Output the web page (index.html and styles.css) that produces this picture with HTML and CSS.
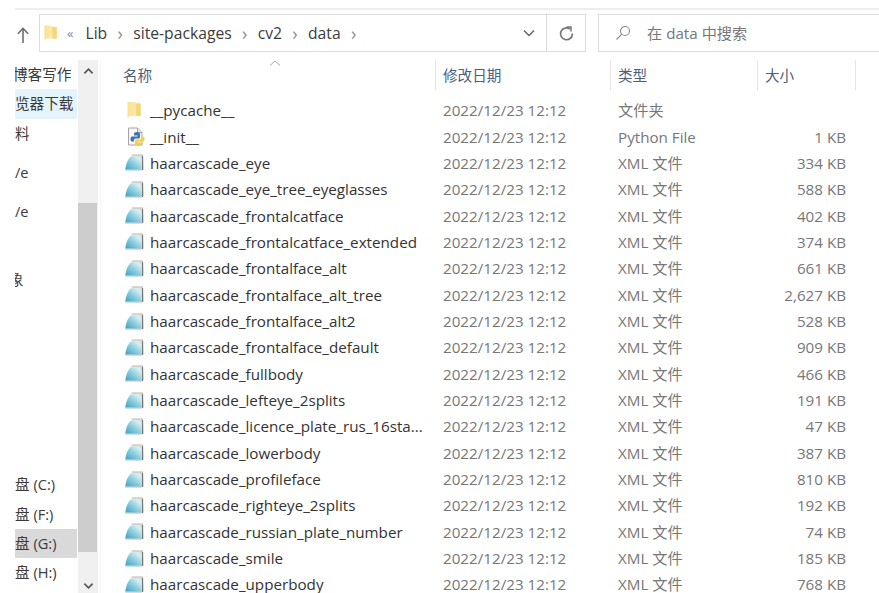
FILE: index.html
```html
<!DOCTYPE html>
<html lang="zh">
<head>
<meta charset="utf-8">
<title>data</title>
<link rel="stylesheet" href="styles.css">
</head>
<body>
<svg class="defs" width="0" height="0" aria-hidden="true">
  <defs>
    <linearGradient id="fold" x1="0" x2="1" y1="0" y2="0"><stop offset="0" stop-color="#fbe08e"/><stop offset="0.6" stop-color="#fde9a8"/><stop offset="1" stop-color="#f6d16e"/></linearGradient>
    <linearGradient id="xmlg" x1="0" x2="1" y1="1" y2="0"><stop offset="0" stop-color="#3f9fc4"/><stop offset="0.5" stop-color="#8fcfdf"/><stop offset="0.85" stop-color="#d8f0f3"/><stop offset="1" stop-color="#b8e2ea"/></linearGradient>
    <symbol id="i-folder" viewBox="0 0 14 16">
      <path d="M.5 0h7.500l1.500 1.500H13.500V14H2.500L.5 16z" fill="url(#fold)"/>
      <path d="M8.500 1.500h5V14h-4z" fill="#f7d679"/>
    </symbol>
    <symbol id="i-py" viewBox="0 0 18 20">
      <path d="M1.500 1h9l4.500 4.500V18h-13.500z" fill="#f7f7f7" stroke="#a5a5a5"/>
      <path d="M10.500 1v4.500H15" fill="#e6e6e6" stroke="#a5a5a5"/>
      <path d="M10 5C7.500 5 7 6 7 7v1.500h3.500v1H5C4 9.500 3.500 10.500 3.500 12s.5 2.500 1.500 2.500h2V13c0-1 1-1.500 2-1.500h2.500c1 0 1.500-.7 1.500-1.500V7c0-1.200-1.200-2-3-2z" fill="#3a76ad"/>
      <path d="M11 19c2.500 0 3-1 3-2v-1.500h-3.500v-1H16c1 0 1.500-1 1.500-2.500S17 9.500 16 9.500h-2V11c0 1-1 1.500-2 1.500H9.500C8.500 12.500 8 13.200 8 14v3c0 1.200 1.200 2 3 2z" fill="#f6cf45"/>
    </symbol>
    <symbol id="i-xml" viewBox="0 0 19 17">
      <path d="M6.500.5H18l.5 15h-2z" fill="#bdb7a8"/>
      <path d="M6 1.500h11.500v14H6z" fill="#e9e7e0"/>
      <path d="M5.500 2.500H16.500V15.500H.3C.8 10 2.800 5.500 5.500 2.500z" fill="url(#xmlg)"/>
      <path d="M17.500 2v14" stroke="#777" stroke-width="1.200" fill="none"/>
      <path d="M.3 16h16.500" stroke="#7fb5c6" stroke-width=".8" fill="none"/>
    </symbol>
  </defs>
</svg>
<div class="window">
  <div class="topline"></div>
  <div class="toolbar">
    <svg class="up" viewBox="0 0 12 16"><path d="M6 16V1.500M.8 6.800 6 1.500l5.200 5.300" fill="none" stroke="#707070" stroke-width="1.600"/></svg>
    <div class="address">
      <svg class="addr-folder"><use href="#i-folder"/></svg>
      <span class="crumb-more">«</span>
      <span class="crumb">Lib</span><span class="sep">›</span>
      <span class="crumb">site-packages</span><span class="sep">›</span>
      <span class="crumb">cv2</span><span class="sep">›</span>
      <span class="crumb">data</span><span class="sep">›</span>
      <span class="spacer"></span>
      <svg class="chev" viewBox="0 0 12 8"><path d="M1 1.500 6 6.500l5-5" fill="none" stroke="#666" stroke-width="1.500"/></svg>
      <span class="refresh">
        <svg viewBox="0 0 16 16"><path d="M11.800 3.300A6.300 6.300 0 1 0 14.300 8" fill="none" stroke="#777" stroke-width="1.800"/><path d="M8 1h4.800v4.800" fill="none" stroke="#777" stroke-width="1.600"/></svg>
      </span>
    </div>
    <div class="search">
      <svg class="lens" viewBox="0 0 16 16"><circle cx="10" cy="6" r="4.500" fill="none" stroke="#8a8a8a" stroke-width="1.100"/><path d="M6.800 9.200 1.500 14.500" stroke="#8a8a8a" stroke-width="1.100"/></svg>
      <span>在 data 中搜索</span>
    </div>
  </div>
  <div class="main">
    <nav class="sidebar">
      <div class="nav"><span class="cut-a">博客写作</span></div>
      <div class="nav active"><span>览器下载</span></div>
      <div class="nav"><span>料</span></div>
      <div class="nav gap-s"><span>/e</span></div>
      <div class="nav gap-s2"><span>/e</span></div>
      <div class="nav gap-l"><span class="cut-e">象</span></div>
      <div class="nav gap-xl"><span>盘 (C:)</span></div>
      <div class="nav"><span>盘 (F:)</span></div>
      <div class="nav selected"><span>盘 (G:)</span></div>
      <div class="nav"><span>盘 (H:)</span></div>
    </nav>
    <div class="scrollbar">
      <div class="sb-btn sb-top"><svg viewBox="0 0 12 8"><path d="M1.500 6.500 6 2l4.500 4.500" fill="none" stroke="#555" stroke-width="1.800"/></svg></div>
      <div class="sb-thumb"></div>
      <div class="sb-btn sb-bottom"><svg viewBox="0 0 12 8"><path d="M1.500 1.500 6 6l4.500-4.500" fill="none" stroke="#555" stroke-width="1.800"/></svg></div>
    </div>
    <section class="files">
      <div class="header">
        <svg class="sort" viewBox="0 0 12 6"><path d="M1 5.500 6 1l5 4.500" fill="none" stroke="#a8a8a8"/></svg>
        <div class="hcell h-name">名称</div>
        <div class="hcell h-date">修改日期</div>
        <div class="hcell h-type">类型</div>
        <div class="hcell h-size">大小</div>
      </div>
      <div class="rows">
        <div class="row"><svg class="ico ico-folder"><use href="#i-folder"/></svg><span class="name">__pycache__</span><span class="cell">2022/12/23 12:12</span><span class="cell">文件夹</span><span class="size"></span></div>
        <div class="row"><svg class="ico ico-py"><use href="#i-py"/></svg><span class="name">__init__</span><span class="cell">2022/12/23 12:12</span><span class="cell">Python File</span><span class="size">1 KB</span></div>
        <div class="row"><svg class="ico"><use href="#i-xml"/></svg><span class="name">haarcascade_eye</span><span class="cell">2022/12/23 12:12</span><span class="cell">XML 文件</span><span class="size">334 KB</span></div>
        <div class="row"><svg class="ico"><use href="#i-xml"/></svg><span class="name">haarcascade_eye_tree_eyeglasses</span><span class="cell">2022/12/23 12:12</span><span class="cell">XML 文件</span><span class="size">588 KB</span></div>
        <div class="row"><svg class="ico"><use href="#i-xml"/></svg><span class="name">haarcascade_frontalcatface</span><span class="cell">2022/12/23 12:12</span><span class="cell">XML 文件</span><span class="size">402 KB</span></div>
        <div class="row"><svg class="ico"><use href="#i-xml"/></svg><span class="name">haarcascade_frontalcatface_extended</span><span class="cell">2022/12/23 12:12</span><span class="cell">XML 文件</span><span class="size">374 KB</span></div>
        <div class="row"><svg class="ico"><use href="#i-xml"/></svg><span class="name">haarcascade_frontalface_alt</span><span class="cell">2022/12/23 12:12</span><span class="cell">XML 文件</span><span class="size">661 KB</span></div>
        <div class="row"><svg class="ico"><use href="#i-xml"/></svg><span class="name">haarcascade_frontalface_alt_tree</span><span class="cell">2022/12/23 12:12</span><span class="cell">XML 文件</span><span class="size">2,627 KB</span></div>
        <div class="row"><svg class="ico"><use href="#i-xml"/></svg><span class="name">haarcascade_frontalface_alt2</span><span class="cell">2022/12/23 12:12</span><span class="cell">XML 文件</span><span class="size">528 KB</span></div>
        <div class="row"><svg class="ico"><use href="#i-xml"/></svg><span class="name">haarcascade_frontalface_default</span><span class="cell">2022/12/23 12:12</span><span class="cell">XML 文件</span><span class="size">909 KB</span></div>
        <div class="row"><svg class="ico"><use href="#i-xml"/></svg><span class="name">haarcascade_fullbody</span><span class="cell">2022/12/23 12:12</span><span class="cell">XML 文件</span><span class="size">466 KB</span></div>
        <div class="row"><svg class="ico"><use href="#i-xml"/></svg><span class="name">haarcascade_lefteye_2splits</span><span class="cell">2022/12/23 12:12</span><span class="cell">XML 文件</span><span class="size">191 KB</span></div>
        <div class="row"><svg class="ico"><use href="#i-xml"/></svg><span class="name">haarcascade_licence_plate_rus_16sta...</span><span class="cell">2022/12/23 12:12</span><span class="cell">XML 文件</span><span class="size">47 KB</span></div>
        <div class="row"><svg class="ico"><use href="#i-xml"/></svg><span class="name">haarcascade_lowerbody</span><span class="cell">2022/12/23 12:12</span><span class="cell">XML 文件</span><span class="size">387 KB</span></div>
        <div class="row"><svg class="ico"><use href="#i-xml"/></svg><span class="name">haarcascade_profileface</span><span class="cell">2022/12/23 12:12</span><span class="cell">XML 文件</span><span class="size">810 KB</span></div>
        <div class="row"><svg class="ico"><use href="#i-xml"/></svg><span class="name">haarcascade_righteye_2splits</span><span class="cell">2022/12/23 12:12</span><span class="cell">XML 文件</span><span class="size">192 KB</span></div>
        <div class="row"><svg class="ico"><use href="#i-xml"/></svg><span class="name">haarcascade_russian_plate_number</span><span class="cell">2022/12/23 12:12</span><span class="cell">XML 文件</span><span class="size">74 KB</span></div>
        <div class="row"><svg class="ico"><use href="#i-xml"/></svg><span class="name">haarcascade_smile</span><span class="cell">2022/12/23 12:12</span><span class="cell">XML 文件</span><span class="size">185 KB</span></div>
        <div class="row"><svg class="ico"><use href="#i-xml"/></svg><span class="name">haarcascade_upperbody</span><span class="cell">2022/12/23 12:12</span><span class="cell">XML 文件</span><span class="size">768 KB</span></div>
      </div>
    </section>
  </div>
</div>
</body>
</html>
```

FILE: styles.css
```css
* { box-sizing: border-box; }
html, body { margin: 0; padding: 0; background: #fff; }
body {
  font-family: "Open Sans", "Noto Sans CJK SC", sans-serif;
  font-size: 15.200px;
  line-height: 20px;
  color: #333;
}
.defs { display: block; height: 0; }
.window {
  width: 879px;
  height: 593px;
  overflow: hidden;
  display: flex;
  flex-direction: column;
}
.topline {
  height: 2px;
  margin: 8px 0 0 15px;
  background: #eeeeee;
  flex: none;
}
.toolbar {
  flex: none;
  height: 38px;
  margin-top: 4px;
  display: flex;
  align-items: stretch;
  padding-left: 17px;
}
.up { width: 12px; height: 16px; align-self: center; margin-right: 10px; margin-top: 3px; }
.address {
  width: 547px;
  border: 1px solid #dcdcdc;
  display: flex;
  align-items: center;
  padding-left: 4px;
  color: #3c3c3c;
}
.addr-folder { width: 13px; height: 16px; margin-top: -1px; margin-right: 10px; }
.crumb-more { color: #8a8a8a; margin-right: 12px; font-size: 13px; }
.crumb { color: #3c3c3c; font-size: 15.700px; }
.sep { width: 26px; text-align: center; color: #8f8f8f; font-size: 18px; }
.spacer { flex: 1; }
.chev { width: 12px; height: 8px; margin-right: 11px; }
.refresh {
  width: 39px;
  align-self: stretch;
  border-left: 1px solid #dcdcdc;
  display: flex;
  align-items: center;
  justify-content: center;
}
.refresh svg { width: 15px; height: 15px; }
.search {
  flex: 1;
  margin-left: 12px;
  border: 1px solid #dcdcdc;
  border-right: 0;
  display: flex;
  align-items: center;
  padding: 0 0 1px 16px;
  color: #777;
}
.lens { width: 16px; height: 16px; margin-right: 16px; }
.main {
  flex: 1;
  min-height: 0;
  margin-top: 8px;
  display: flex;
  padding-left: 15px;
}
.sidebar {
  flex: none;
  width: 63px;
  padding-right: 1px;
  overflow: hidden;
  color: #3a3a3a;
  font-size: 14.600px;
}
.nav {
  height: 29.300px;
  line-height: 29.300px;
  white-space: nowrap;
  overflow: hidden;
}
.gap-s { margin-top: 10.500px; }
.gap-s2 { margin-top: 9.700px; }
.gap-l { margin-top: 38.500px; }
.gap-xl { margin-top: 176px; }
.active { background: #e5f3fb; }
.selected { background: #d9d9d9; }
.nav span { display: inline-block; }
.nav .cut-a { margin-left: -2px; }
.nav .cut-e { margin-left: -6px; }
.scrollbar {
  flex: none;
  width: 20px;
  background: #f0f0f0;
  display: flex;
  flex-direction: column;
  margin-right: 2px;
}
.sb-btn { display: flex; justify-content: center; }
.sb-btn svg { width: 11px; height: 8px; }
.sb-top { height: 143px; padding-top: 7px; }
.sb-thumb { height: 349px; width: 19px; background: #cdcdcd; flex: none; }
.sb-bottom { flex: 1; padding-top: 30px; }
.files {
  flex: 1;
  min-width: 0;
  border-left: 1px solid #f5f5f5;
}
.header {
  position: relative;
  height: 30px;
  display: flex;
  color: #4c607a;
  line-height: 30px;
  font-size: 14.600px;
}
.sort { position: absolute; left: 168px; top: 0; width: 12px; height: 6px; }
.hcell { height: 30px; border-right: 1px solid #e5e5e5; flex: none; }
.h-name { width: 335px; padding-left: 22px; }
.h-date { width: 175px; padding-left: 7px; }
.h-type { width: 147px; padding-left: 7px; }
.h-size { width: 98px; padding-left: 7px; }
.rows { padding-top: 7.100px; }
.row {
  height: 26.350px;
  display: grid;
  grid-template-columns: 25px 293px 175px 100px 128px;
  padding-left: 24px;
  align-items: center;
  white-space: nowrap;
  color: #7a7a7a;
}
.ico { width: 19px; height: 17px; }
.ico-folder { width: 14px; height: 16px; margin-left: 2px; }
.ico-py { width: 18px; height: 20px; margin-left: 2px; }
.name { color: #333; }
.cell { color: #777; }
.size { text-align: right; color: #777; }
```
